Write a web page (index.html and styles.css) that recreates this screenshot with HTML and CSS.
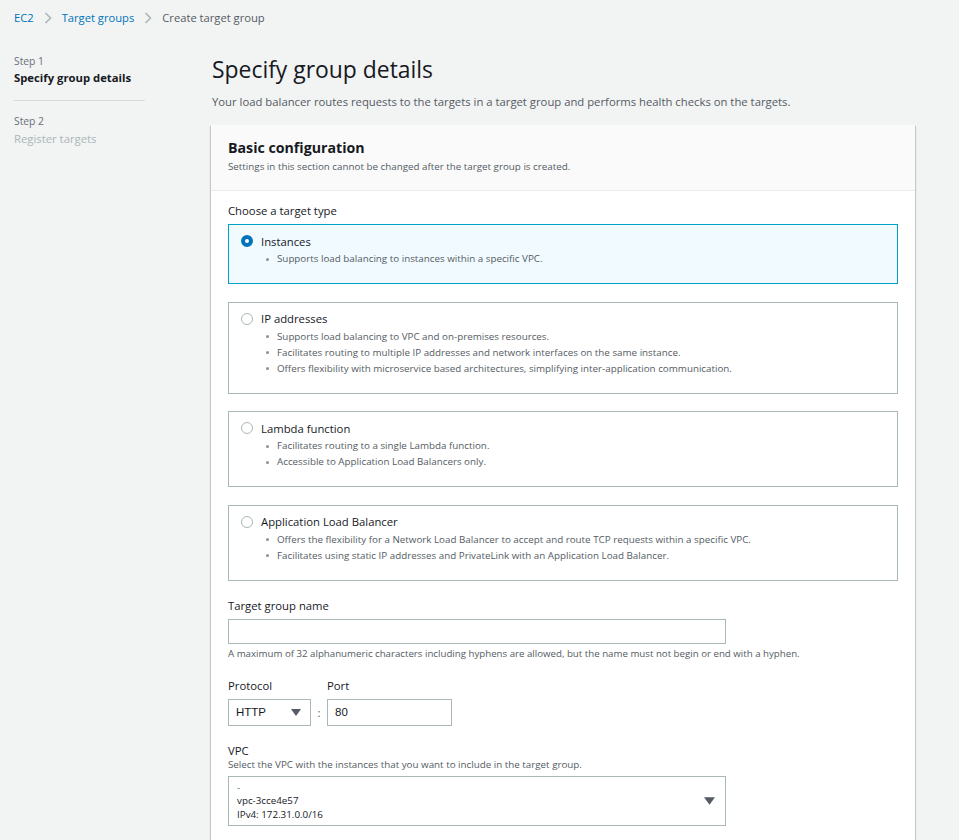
FILE: index.html
```html
<!DOCTYPE html>
<html lang="en">
<head>
<meta charset="utf-8">
<title>Create target group</title>
<link rel="stylesheet" href="styles.css">
</head>
<body>
<nav class="crumbs">
  <a class="crumb-link" href="#">EC2</a>
  <svg class="chev" viewBox="0 0 8 12" width="8" height="12"><path d="M1.5 1 L6.5 6 L1.5 11" fill="none" stroke="#aab7b8" stroke-width="1.6"/></svg>
  <a class="crumb-link" href="#">Target groups</a>
  <svg class="chev" viewBox="0 0 8 12" width="8" height="12"><path d="M1.5 1 L6.5 6 L1.5 11" fill="none" stroke="#aab7b8" stroke-width="1.6"/></svg>
  <span class="crumb-current">Create target group</span>
</nav>

<div class="layout">
  <aside class="steps">
    <div class="step">
      <div class="step-num">Step 1</div>
      <div class="step-title active">Specify group details</div>
    </div>
    <div class="step step-next">
      <div class="step-num">Step 2</div>
      <div class="step-title muted">Register targets</div>
    </div>
  </aside>

  <main class="main">
    <h1 class="page-title">Specify group details</h1>
    <p class="page-desc">Your load balancer routes requests to the targets in a target group and performs health checks on the targets.</p>

    <section class="panel">
      <header class="panel-head">
        <h2 class="panel-title">Basic configuration</h2>
        <p class="panel-sub">Settings in this section cannot be changed after the target group is created.</p>
      </header>
      <div class="panel-body">
        <div class="label">Choose a target type</div>
        <div class="cards">
          <div class="card selected">
            <div class="card-head"><span class="radio on"></span><span class="card-title">Instances</span></div>
            <ul class="bullets">
              <li>Supports load balancing to instances within a specific VPC.</li>
            </ul>
          </div>
          <div class="card">
            <div class="card-head"><span class="radio"></span><span class="card-title">IP addresses</span></div>
            <ul class="bullets">
              <li>Supports load balancing to VPC and on-premises resources.</li>
              <li>Facilitates routing to multiple IP addresses and network interfaces on the same instance.</li>
              <li>Offers flexibility with microservice based architectures, simplifying inter-application communication.</li>
            </ul>
          </div>
          <div class="card">
            <div class="card-head"><span class="radio"></span><span class="card-title">Lambda function</span></div>
            <ul class="bullets">
              <li>Facilitates routing to a single Lambda function.</li>
              <li>Accessible to Application Load Balancers only.</li>
            </ul>
          </div>
          <div class="card">
            <div class="card-head"><span class="radio"></span><span class="card-title">Application Load Balancer</span></div>
            <ul class="bullets">
              <li>Offers the flexibility for a Network Load Balancer to accept and route TCP requests within a specific VPC.</li>
              <li>Facilitates using static IP addresses and PrivateLink with an Application Load Balancer.</li>
            </ul>
          </div>
        </div>

        <div class="field">
          <div class="label">Target group name</div>
          <div class="input wide"></div>
          <div class="hint">A maximum of 32 alphanumeric characters including hyphens are allowed, but the name must not begin or end with a hyphen.</div>
        </div>

        <div class="proto-grid">
          <div class="label">Protocol</div>
          <div></div>
          <div class="label">Port</div>
          <div class="input select-sm"><span>HTTP</span><svg class="caret" viewBox="0 0 10 7" width="10" height="7"><path d="M0 0 H10 L5 7 Z" fill="#545b64"/></svg></div>
          <div class="colon">:</div>
          <div class="input port"><span>80</span></div>
        </div>

        <div class="field vpc">
          <div class="label vpc-label">VPC</div>
          <div class="vpc-desc">Select the VPC with the instances that you want to include in the target group.</div>
          <div class="input vpc-box">
            <div class="vpc-lines">
              <div class="dash">-</div>
              <div>vpc-3cce4e57</div>
              <div class="ipv4">IPv4: 172.31.0.0/16</div>
            </div>
            <svg class="caret" viewBox="0 0 10 7" width="11" height="8"><path d="M0 0 H10 L5 7 Z" fill="#545b64"/></svg>
          </div>
        </div>
      </div>
    </section>
  </main>
</div>
</body>
</html>
```

FILE: styles.css
```css
* { box-sizing: border-box; }

body {
  margin: 0;
  background: #f2f3f3;
  font-family: "Open Sans", "Noto Sans", sans-serif;
  color: #16191f;
  font-size: 11.3px;
  overflow: hidden;
}

.crumbs {
  display: flex;
  align-items: center;
  padding: 10px 14px 0;
  height: 26px;
  line-height: 16px;
  font-size: 11.2px;
}
.crumb-link { color: #0073bb; text-decoration: none; }
.crumb-current { color: #545b64; }
.chev { margin: 0 10px 0 10px; }

.layout {
  display: flex;
  align-items: flex-start;
}

.steps {
  width: 131px;
  margin-left: 14px;
  margin-right: 66px;
  padding-top: 28px;
}
.step-num {
  font-size: 10.3px;
  line-height: 14px;
  color: #687078;
}
.step-title {
  font-size: 11.3px;
  line-height: 16px;
  margin-top: 2px;
}
.step-title.active { font-weight: 700; }
.step-title.muted { color: #aab7b8; margin-top: 3px; }
.step { padding-bottom: 14px; }
.step-next {
  border-top: 1px solid #d5dbdb;
  padding-top: 13px;
}

.main {
  width: 704px;
  padding-top: 29px;
}
.page-title {
  margin: 0;
  font-size: 22.9px;
  line-height: 30px;
  font-weight: 400;
  color: #16191f;
  padding-left: 1px;
}
.page-desc {
  margin: 8px 0 14px;
  padding-left: 1px;
  font-size: 11.3px;
  line-height: 18px;
  color: #545b64;
}

.panel {
  background: #fff;
  box-shadow: 0 1px 1px 0 rgba(0,28,36,.3), 1px 1px 1px 0 rgba(0,28,36,.15), -1px 1px 1px 0 rgba(0,28,36,.15);
}
.panel-head {
  background: #fafafa;
  border-bottom: 1px solid #eaeded;
  padding: 13px 17px 15px;
}
.panel-title {
  margin: 0;
  font-size: 14.2px;
  line-height: 20px;
  font-weight: 700;
}
.panel-sub {
  margin: 1px 0 0;
  font-size: 9.8px;
  line-height: 16px;
  color: #545b64;
}
.panel-body {
  padding: 12px 17px 40px;
}

.label {
  font-size: 11.3px;
  line-height: 16px;
  color: #16191f;
}

.cards {
  margin-top: 5px;
  display: flex;
  flex-direction: column;
  gap: 17.67px;
}
.card {
  border: 1px solid #aab7b8;
  padding: 7px 12px 16px;
}
.card.selected {
  border-color: #00a1c9;
  background: #f1faff;
}
.card-head {
  display: flex;
  align-items: center;
  height: 18px;
  margin-bottom: 1px;
}
.radio {
  width: 12px;
  height: 12px;
  border-radius: 50%;
  border: 1px solid #aab7b8;
  background: #fff;
  margin-right: 8px;
  flex: none;
}
.radio.on {
  border: 4px solid #0073bb;
  background: #fff;
}
.card-title {
  font-size: 11.3px;
  color: #16191f;
}
.bullets {
  list-style: none;
  margin: 0;
  padding: 0 0 0 20px;
}
.bullets li {
  display: flex;
  align-items: center;
  font-size: 9.8px;
  line-height: 16px;
  color: #545b64;
}
.bullets li::before {
  content: "";
  width: 3px;
  height: 3px;
  border-radius: 50%;
  background: #879596;
  margin: 0 8px 0 5px;
  flex: none;
}

.field { margin-top: 17px; }
.input {
  border: 1px solid #aab7b8;
  background: #fff;
}
.wide {
  width: 498px;
  height: 25px;
  margin-top: 5px;
}
.hint {
  margin-top: 2px;
  font-size: 9.7px;
  line-height: 16px;
  color: #545b64;
}

.proto-grid {
  margin-top: 16px;
  display: grid;
  grid-template-columns: 83px 16px 125px;
  grid-template-rows: 16px 27px;
  row-gap: 5px;
  align-items: center;
}
.select-sm {
  height: 27px;
  display: flex;
  align-items: center;
  justify-content: space-between;
  padding: 0 9px 0 7px;
  font-family: "Liberation Sans", Arial, sans-serif;
  font-size: 11.5px;
  color: #16191f;
}
.colon {
  text-align: center;
  font-size: 11.3px;
  color: #545b64;
}
.port {
  height: 27px;
  display: flex;
  align-items: center;
  padding-left: 7px;
  font-family: "Liberation Sans", Arial, sans-serif;
  font-size: 11.5px;
}

.vpc .vpc-label { line-height: 15px; }
.vpc-desc {
  font-size: 9.8px;
  line-height: 13px;
  color: #545b64;
}
.vpc-box {
  margin-top: 5px;
  width: 498px;
  height: 50px;
  display: flex;
  align-items: center;
  justify-content: space-between;
  padding: 0 10px 0 8px;
}
.vpc-lines {
  font-size: 9.8px;
  line-height: 13.5px;
  color: #16191f;
}
.vpc-lines .dash { color: #687078; }
.vpc-lines .ipv4 { color: #16191f; }
.caret { flex: none; }
```
